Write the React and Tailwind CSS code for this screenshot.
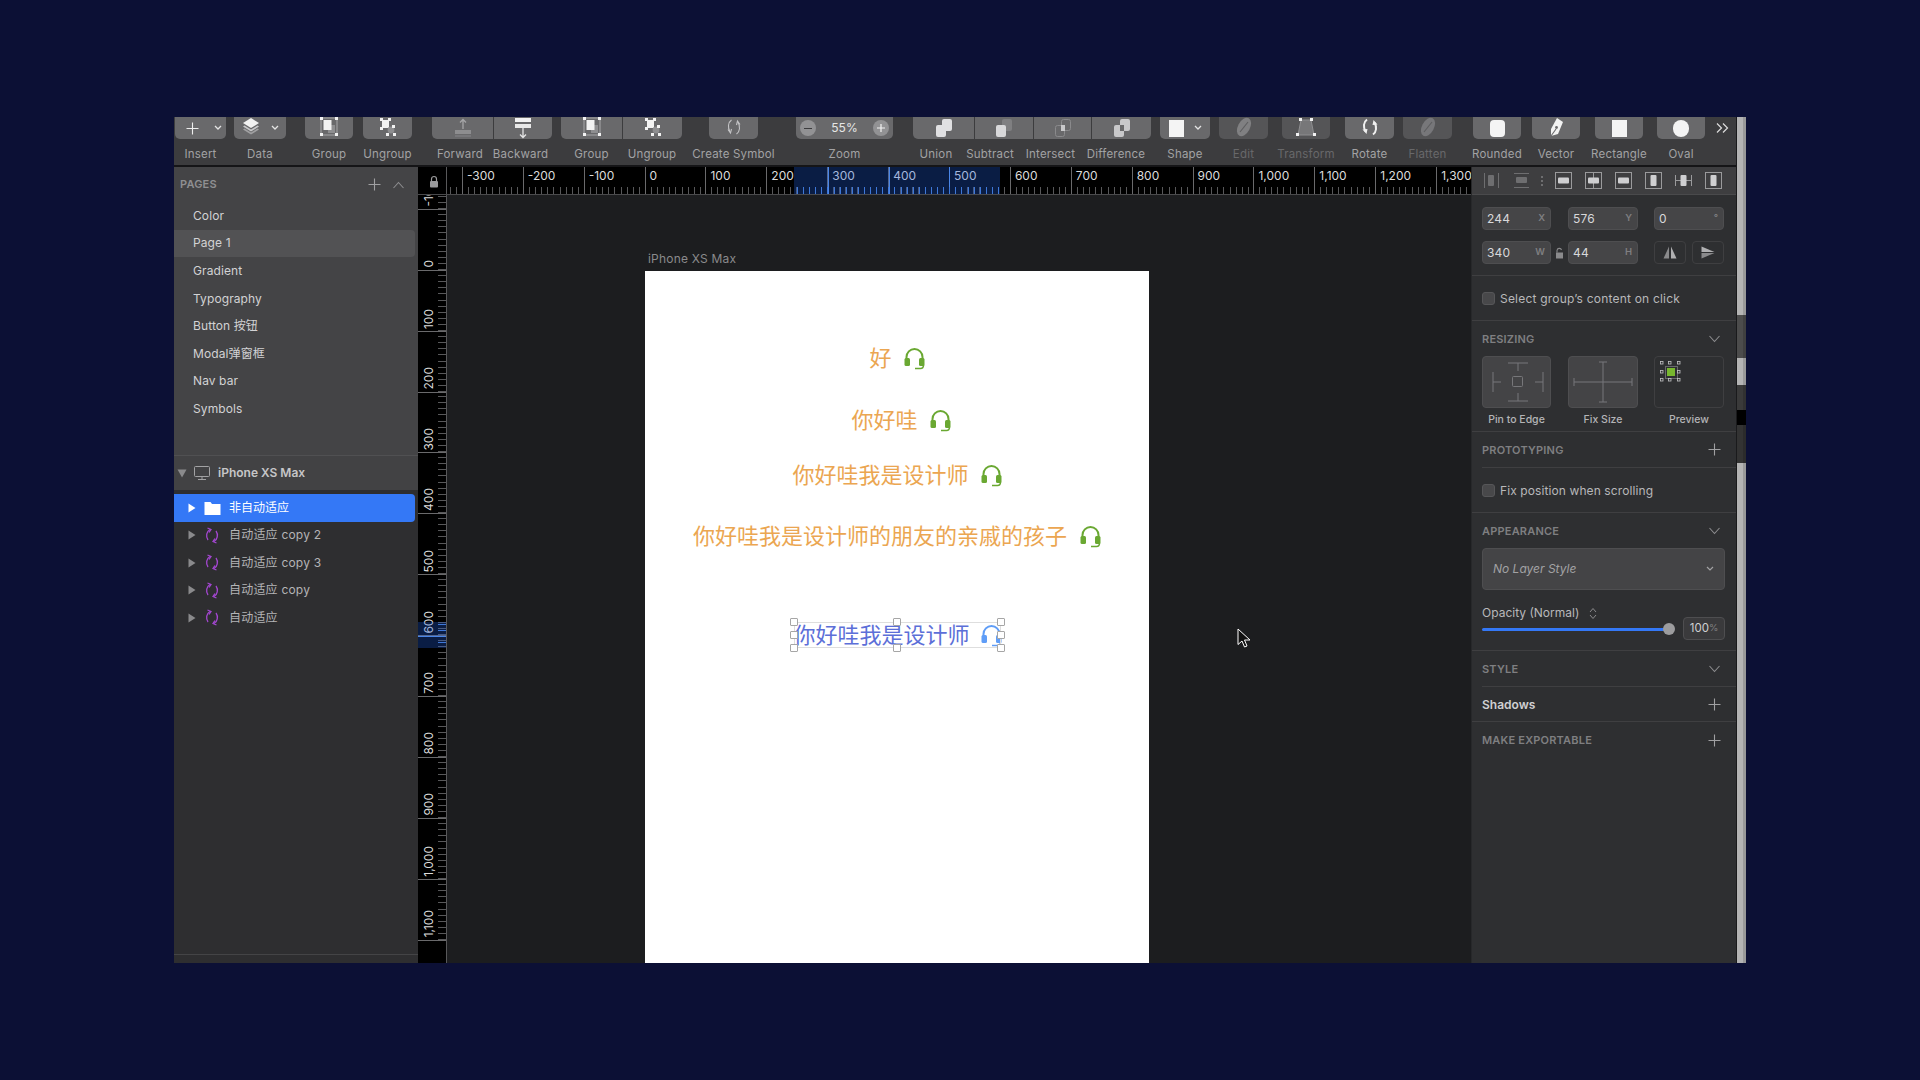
const Svg = ({ w = 22, h = 22, className = "", children }) => (
  <svg width={w} height={h} viewBox={`0 0 ${w} ${h}`} fill="none" className={`shrink-0 ${className}`}>
    {children}
  </svg>
);

const Plus = ({ c = "#bdbdbf" }) => (
  <Svg w={13} h={13}>
    <path d="M6.5 0.5v12M0.5 6.5h12" stroke={c} strokeWidth="1.1" />
  </Svg>
);

const Chevron = ({ c = "#8d8d8f", up = false }) => (
  <Svg w={13} h={8}>
    <path d={up ? "M1.5 7 6.5 1.5 11.5 7" : "M1.5 1 6.5 6.5 11.5 1"} stroke={c} strokeWidth="1.1" />
  </Svg>
);

const MiniChevron = () => (
  <Svg w={8} h={6}>
    <path d="M1 1 4 4 7 1" stroke="#e4e4e4" strokeWidth="1.3" />
  </Svg>
);

const Handles = ({ pts }) =>
  pts.map(([x, y]) => <rect key={`${x}-${y}`} x={x} y={y} width="3" height="3" fill="#f2f2f2" />);

const GroupIcon = () => (
  <Svg>
    <rect x="3" y="1" width="16" height="17" fill="none" stroke="#a8a8aa" />
    <rect x="10" y="8" width="7" height="8" fill="#8e8e90" />
    <rect x="5.5" y="3" width="8" height="10" fill="#f2f2f2" />
    <Handles pts={[[2, 0], [17, 0], [2, 16], [17, 16]]} />
  </Svg>
);

const UngroupIcon = () => (
  <Svg>
    <rect x="5" y="3" width="7" height="8" fill="#f2f2f2" />
    <circle cx="14" cy="13" r="3.4" fill="#8e8e90" />
    <Handles pts={[[3, 1], [11, 1], [3, 10], [15, 8], [9, 16], [16, 16]]} />
  </Svg>
);

const ForwardIcon = () => (
  <Svg>
    <rect x="3" y="13" width="16" height="4" fill="#8d8d8f" />
    <rect x="3" y="18" width="16" height="2" fill="#77777a" />
    <path d="M11 12V3M8 5.5 11 2.5l3 3" stroke="#a5a5a7" strokeWidth="1.3" />
  </Svg>
);

const BackwardIcon = () => (
  <Svg>
    <rect x="3" y="1" width="16" height="4" fill="#f2f2f2" />
    <rect x="3" y="7" width="16" height="4" fill="#e8e8e8" />
    <path d="M11 11v9M8 17.5l3 3 3-3" stroke="#e4e4e4" strokeWidth="1.3" />
  </Svg>
);

const BoolIcon = ({ a, b }) => (
  <Svg>
    <rect x="9" y="2" width="10" height="12" rx="2" fill={a} />
    <rect x="3" y="8" width="10" height="12" rx="2" fill={b} />
  </Svg>
);

const IntersectIcon = () => (
  <Svg>
    <rect x="9.5" y="2.5" width="9" height="11" rx="2" stroke="#8a8a8c" />
    <rect x="3.5" y="8.5" width="9" height="11" rx="2" stroke="#8a8a8c" />
    <rect x="9" y="8" width="4" height="6" fill="#c8c8ca" />
  </Svg>
);

const DifferenceIcon = () => (
  <Svg>
    <rect x="9" y="2" width="10" height="12" rx="2" fill="#c8c8ca" />
    <rect x="3" y="8" width="10" height="12" rx="2" fill="#c8c8ca" />
    <rect x="9" y="8" width="4" height="6" fill="#69696b" />
  </Svg>
);

const EditIcon = ({ c = "#808082" }) => (
  <Svg>
    <ellipse cx="11" cy="10" rx="6" ry="10" transform="rotate(28 11 10)" fill={c} />
    <path d="M7 15 15 5" stroke="#5e5e60" strokeWidth="1.2" />
  </Svg>
);

const TransformIcon = () => (
  <Svg>
    <path d="M6 3h10l3 15H3z" fill="#777779" stroke="#8e8e90" />
    <Handles pts={[[4, 1], [15, 1], [1, 16], [18, 16]]} />
  </Svg>
);

const RotateIcon = () => (
  <Svg>
    <path d="M8 2.5C4.5 5 4 10 6.5 14.5" stroke="#f0f0f0" strokeWidth="2" />
    <path d="M14 17.5C17.5 15 18 10 15.5 5.5" stroke="#f0f0f0" strokeWidth="2" />
    <path d="M3.5 12.5 7.5 17l1-5zM18.5 7.5 14.500 3l-1 5z" fill="#f0f0f0" />
  </Svg>
);

const VectorIcon = () => (
  <Svg>
    <path d="M12 1l6 4-5 12-7 2 0-7z" fill="#f2f2f2" />
    <path d="M6 19l5-7" stroke="#69696b" strokeWidth="1.1" />
    <circle cx="11.500" cy="10.500" r="1.400" fill="#69696b" />
  </Svg>
);

const LayersIcon = () => (
  <Svg w={20} h={22}>
    <path d="M10 1 18 6 10 11 2 6z" fill="#f2f2f2" />
    <path d="M3.500 8.500 10 12.500 16.500 8.500 18 9.500 10 14.500 2 9.500z" fill="#c8c8ca" />
    <path d="M3.500 11.500 10 15.500 16.500 11.500 18 12.500 10 17.500 2 12.500z" fill="#a0a0a2" />
  </Svg>
);

const btn = "h-[22px] w-full flex items-center justify-center";

const Tool = ({ label, className, labelClass = "", shape = "rounded-b-[5px]", dim = false, fill = "bg-[#69696b]", children }) => (
  <div className={`flex flex-col items-center shrink-0 ${className}`}>
    <div className={`${btn} ${fill} ${shape}`}>{children}</div>
    <span className={`mt-[8px] text-[11.5px] leading-[14px] tracking-[0.2px] whitespace-nowrap ${labelClass} ${dim ? "text-[#68686a]" : "text-[#a2a2a4]"}`}>
      {label}
    </span>
  </div>
);

const Toolbar = () => (
  <div className="h-[50px] shrink-0 flex bg-[#3c3c3e] border-b-2 border-[#151517] overflow-hidden">
    <Tool label="Insert" className="w-[51px] ml-[1px]">
      <div className="ml-[6px]"><Plus c="#eeeeee" /></div>
      <div className="ml-[15px]"><MiniChevron /></div>
    </Tool>
    <Tool label="Data" className="w-[52px] ml-[8px]">
      <LayersIcon />
      <div className="ml-[10px]"><MiniChevron /></div>
    </Tool>
    <Tool label="Group" className="w-[48px] ml-[19px]"><GroupIcon /></Tool>
    <Tool label="Ungroup" className="w-[49px] ml-[10px]"><UngroupIcon /></Tool>
    <Tool label="Forward" labelClass="mr-[5px]" className="w-[61px] ml-[20px]" shape="rounded-bl-[5px]"><ForwardIcon /></Tool>
    <Tool label="Backward" labelClass="mr-[5px]" className="w-[59px] border-l border-l-transparent" shape="rounded-br-[5px]"><BackwardIcon /></Tool>
    <Tool label="Group" className="w-[61px] ml-[9px]" shape="rounded-bl-[5px]"><GroupIcon /></Tool>
    <Tool label="Ungroup" labelClass="mr-[1px]" className="w-[60px] border-l border-l-transparent" shape="rounded-br-[5px]"><UngroupIcon /></Tool>
    <Tool label="Create Symbol" className="w-[49px] ml-[27px]">
      <Svg>
        <path d="M8.500 3C5 5.500 4.500 10.500 7 15" stroke="#c4c4c6" strokeWidth="1.100" />
        <path d="M13.500 17C17 14.500 17.500 9.500 15 5" stroke="#c4c4c6" strokeWidth="1.100" />
        <path d="M5 12.500l2.500 3.500 1-4M17 7.500 14.500 4l-1 4" stroke="#c4c4c6" strokeWidth="1.100" />
      </Svg>
    </Tool>
    <Tool label="Zoom" className="w-[97px] ml-[38px]">
      <div className="w-full flex items-center justify-between px-[4px]">
        <div className="w-[16px] h-[16px] rounded-full bg-[#929294] flex items-center justify-center">
          <div className="w-[8px] h-px bg-[#3c3c3e]" />
        </div>
        <span className="text-[12px] text-[#e6e6e6]">55%</span>
        <div className="w-[16px] h-[16px] rounded-full bg-[#929294] flex items-center justify-center">
          <Svg w={10} h={10}><path d="M5 1v8M1 5h8" stroke="#f2f2f2" strokeWidth="1.200" /></Svg>
        </div>
      </div>
    </Tool>
    <Tool label="Union" labelClass="mr-[15px]" className="w-[61px] ml-[20px]" shape="rounded-bl-[5px]"><BoolIcon a="#e0e0e2" b="#e0e0e2" /></Tool>
    <Tool label="Subtract" labelClass="mr-[28px]" className="w-[59px] border-l border-l-transparent" shape=""><BoolIcon a="#7f7f81" b="#d8d8da" /></Tool>
    <Tool label="Intersect" labelClass="mr-[24px]" className="w-[58px] border-l border-l-transparent" shape=""><IntersectIcon /></Tool>
    <Tool label="Difference" labelClass="mr-[11px]" className="w-[60px] border-l border-l-transparent" shape="rounded-br-[5px]"><DifferenceIcon /></Tool>
    <Tool label="Shape" className="w-[50px] ml-[9px]">
      <div className="w-[15px] h-[17px] bg-[#f4f4f4]" />
      <div className="ml-[10px]"><MiniChevron /></div>
    </Tool>
    <Tool label="Edit" dim className="w-[49px] ml-[9px]" fill="bg-[#555557]"><EditIcon /></Tool>
    <Tool label="Transform" dim className="w-[48px] ml-[14px]" fill="bg-[#555557]"><TransformIcon /></Tool>
    <Tool label="Rotate" className="w-[49px] ml-[15px]"><RotateIcon /></Tool>
    <Tool label="Flatten" dim className="w-[49px] ml-[9px]" fill="bg-[#555557]"><EditIcon c="#77777a" /></Tool>
    <Tool label="Rounded" className="w-[48px] ml-[21px]"><div className="w-[15px] h-[17px] rounded-[4px] bg-[#f4f4f4]" /></Tool>
    <Tool label="Vector" className="w-[48px] ml-[11px]"><VectorIcon /></Tool>
    <Tool label="Rectangle" className="w-[48px] ml-[15px]"><div className="w-[15px] h-[17px] bg-[#f4f4f4]" /></Tool>
    <Tool label="Oval" className="w-[48px] ml-[14px]"><div className="w-[16px] h-[17px] rounded-full bg-[#f4f4f4]" /></Tool>
    <div className="ml-[10px] h-[22px] flex items-center">
      <Svg w={14} h={12}>
        <path d="M2 1.500 6.500 6 2 10.500M8 1.500 12.500 6 8 10.500" stroke="#dcdcdc" strokeWidth="1.200" />
      </Svg>
    </div>
  </div>
);

const pages = ["Color", "Page 1", "Gradient", "Typography", "Button 按钮", "Modal弹窗框", "Nav bar", "Symbols"];
const layers = ["自动适应 copy 2", "自动适应 copy 3", "自动适应 copy", "自动适应"];

const Triangle = ({ c = "#8a8a8c" }) => (
  <Svg w={8} h={10}><path d="M0.500 0.500 7.500 5 0.500 9.500z" fill={c} /></Svg>
);

const SymbolIcon = () => (
  <Svg w={16} h={17}>
    <path d="M6 2.500C2.500 4.500 1.500 9.500 4 13" stroke="#a447d1" strokeWidth="1.300" />
    <path d="M10 14.500C13.500 12.500 14.500 7.500 12 4" stroke="#a447d1" strokeWidth="1.300" />
    <path d="M3.500 1 7 2.500 5 5.500M12.500 16 9 14.500l2-3" stroke="#a447d1" strokeWidth="1.300" />
  </Svg>
);

const LeftPanel = () => (
  <div className="w-[244px] shrink-0 flex flex-col">
    <div className="h-[288px] shrink-0 bg-[#444446]">
      <div className="h-[35px] flex items-center pl-[6px] pr-[13px]">
        <span className="text-[11px] font-semibold tracking-[0.2px] text-[#8f8f91]">PAGES</span>
        <div className="ml-auto mr-[11px]"><Plus c="#a0a0a2" /></div>
        <Chevron up />
      </div>
      {pages.map((p) => (
        <div
          key={p}
          className={`h-[27.6px] w-[241px] flex items-center pl-[19px] text-[12px] tracking-[0.1px] text-[#d2d2d4] rounded-r-[4px] ${p === "Page 1" ? "bg-[#525254]" : ""}`}
        >
          {p}
        </div>
      ))}
    </div>
    <div className="h-[35px] shrink-0 flex items-center bg-[#424244] border-t border-[#505052] pl-[3px]">
      <Svg w={10} h={9}><path d="M0.500 0.500h9L5 8.500z" fill="#8a8a8c" /></Svg>
      <Svg w={18} h={16} className="ml-[6px]">
        <rect x="1.500" y="1.500" width="15" height="10" rx="1" stroke="#a2a2a4" />
        <path d="M5 14.500h8M9 11.500v3" stroke="#a2a2a4" />
      </Svg>
      <span className="ml-[7px] text-[12px] font-semibold text-[#c6c6c8]">iPhone XS Max</span>
    </div>
    <div className="flex-1 bg-[#2e2e30] pt-[4px] flex flex-col">
      <div className="h-[27.6px] w-[241px] flex items-center bg-[#3478f6] rounded-r-[4px] pl-[14px]">
        <Triangle c="#ffffff" />
        <Svg w={17} h={14} className="ml-[8px]"><path d="M0.500 1h6l1.500 2h8.500v11H0.500z" fill="#ffffff" /></Svg>
        <span className="ml-[8px] text-[12px] text-white">非自动适应</span>
      </div>
      {layers.map((l) => (
        <div key={l} className="h-[27.5px] flex items-center pl-[14px]">
          <Triangle />
          <div className="ml-[8px]"><SymbolIcon /></div>
          <span className="ml-[9px] text-[12px] tracking-[0.2px] text-[#b4b4b6]">{l}</span>
        </div>
      ))}
      <div className="mt-auto h-[9px] border-t border-[#444446]" />
    </div>
  </div>
);

const hLabels = ["-400", "-300", "-200", "-100", "0", "100", "200", "300", "400", "500", "600", "700", "800", "900", "1,000", "1,100", "1,200", "1,300"];
const vLabels = ["-100", "0", "100", "200", "300", "400", "500", "600", "700", "800", "900", "1,000", "1,100"];
const hTicks = "bg-[repeating-linear-gradient(90deg,transparent_0,transparent_5.09px,#58585a_5.09px,#58585a_6.09px)]";
const vTicks = "bg-[repeating-linear-gradient(0deg,#58585a_0,#58585a_1px,transparent_1px,transparent_6.09px)]";

const HRuler = () => (
  <div className="h-[28px] shrink-0 flex bg-black border-b border-[#4a4a4c]">
    <div className="w-[29px] shrink-0 flex items-center justify-center pl-[3px] pt-[1px] border-r border-[#58585a]">
      <Svg w={10} h={13}>
        <path d="M2.500 6V4a2.500 2.500 0 0 1 5 0v2" stroke="#9a9a9c" strokeWidth="1.200" />
        <rect x="1" y="6" width="8" height="6.500" rx="1" fill="#9a9a9c" />
      </Svg>
    </div>
    <div className="relative flex-1 overflow-hidden">
      <div className="flex h-full -ml-[46px]">
        {hLabels.map((l) => (
          <div key={l} className="w-[60.9px] shrink-0 h-full flex flex-col border-l border-[#6a6a6c]">
            {/* the -400 cell only shows its ticks, its number is scrolled out of view */}
            <span className="pl-[4px] pt-[1px] h-[16px] text-[12px] leading-[15px] text-[#dcdcdc] whitespace-nowrap">
              {l === "-400" ? "" : l}
            </span>
            <div className={`mt-auto h-[7px] ${hTicks}`} />
          </div>
        ))}
      </div>
      {/* selection highlight: layer spans 244..584 */}
      <div className="absolute top-0 left-[347px] w-[206px] h-full flex bg-[#2060e0]/30 overflow-hidden">
        <div className="absolute bottom-0 left-[3px] right-0 h-[7px] bg-[repeating-linear-gradient(90deg,#3f78d8_0,#3f78d8_1px,transparent_1px,transparent_6.09px)]" />
        <div className="ml-[33.7px] w-[60.9px] shrink-0 border-l border-[#4a86e8]" />
        <div className="w-[60.9px] shrink-0 border-l border-[#4a86e8]" />
        <div className="w-[50px] shrink-0 border-l border-[#4a86e8]" />
      </div>
    </div>
  </div>
);

const VRuler = () => (
  <div className="relative w-[29px] shrink-0 bg-black border-r border-[#58585a] overflow-hidden">
    <div className="-mt-[46px] flex flex-col">
      {vLabels.map((l) => (
        <div key={l} className="h-[60.9px] shrink-0 flex border-b border-[#6a6a6c]">
          <div className="flex-1 flex items-end justify-center pl-[2px] pb-[2px]">
            <span className="[writing-mode:vertical-rl] rotate-180 text-[12px] leading-[14px] text-[#dcdcdc] whitespace-nowrap">{l}</span>
          </div>
          <div className={`w-[8px] ${vTicks}`} />
        </div>
      ))}
    </div>
    {/* selection highlight: layer spans 576..620 */}
    <div className="absolute top-[427px] left-0 w-full h-[26px] flex flex-col items-end bg-[#2060e0]/30">
      <div className="mt-[2px] w-[8px] h-px bg-[#3f78d8]" />
      <div className="mt-[5px] w-[8px] h-px bg-[#3f78d8]" />
      <div className="mt-[5.4px] w-full h-px bg-[#4a86e8]" />
      <div className="mt-[5px] w-[8px] h-px bg-[#3f78d8]" />
    </div>
  </div>
);

const Headset = ({ c = "#6aa832" }) => (
  <Svg w={21} h={23}>
    <path d="M2.500 13V10a8 8 0 0 1 16 0v3" stroke={c} strokeWidth="2" />
    <rect x="0.500" y="11" width="5.500" height="8" rx="1.500" fill={c} />
    <rect x="15" y="11" width="5.500" height="8" rx="1.500" fill={c} />
    <path d="M19.500 18c0 2.500-1 3.500-3 3.500H11" stroke={c} strokeWidth="1.500" />
  </Svg>
);

const SelHandle = ({ className }) => (
  <div className={`absolute w-[8px] h-[8px] bg-white border border-[#a6a6a6] rounded-[1px] ${className}`} />
);

const Artboard = () => (
  <div className="flex-1 flex flex-col items-center bg-white text-[22px] leading-[26px] text-[#eba651]">
    <div className="mt-[74px] h-[26px] flex items-center gap-[12px]">
      <span>好</span>
      <Headset />
    </div>
    <div className="mt-[36px] ml-[8px] h-[26px] flex items-center gap-[12px]">
      <span>你好哇</span>
      <Headset />
    </div>
    <div className="mt-[29px] h-[26px] flex items-center gap-[12px]">
      <span>你好哇我是设计师</span>
      <Headset />
    </div>
    <div className="mt-[35px] h-[26px] flex items-center gap-[13px]">
      <span>你好哇我是设计师的朋友的亲戚的孩子</span>
      <Headset />
    </div>
    <div className="relative mt-[73px] h-[26px] w-[207px] flex items-center gap-[11px] text-[#5c6fd8]">
      <span className="whitespace-nowrap">你好哇我是设计师</span>
      <Headset c="#5f9df7" />
      <div className="absolute inset-0 border border-[#dedede]" />
      <SelHandle className="-left-[4px] -top-[4px]" />
      <SelHandle className="left-[99px] -top-[4px]" />
      <SelHandle className="-right-[4px] -top-[4px]" />
      <SelHandle className="-left-[4px] top-[9px]" />
      <SelHandle className="-right-[4px] top-[9px]" />
      <SelHandle className="-left-[4px] -bottom-[4px]" />
      <SelHandle className="left-[99px] -bottom-[4px]" />
      <SelHandle className="-right-[4px] -bottom-[4px]" />
    </div>
  </div>
);

const Canvas = () => (
  <div className="relative flex-1 flex flex-col bg-[#1c1d1f] pt-[57px] pl-[198px] overflow-hidden">
    <div className="h-[14px] mb-[5px] pl-[3px] text-[12px] leading-[14px] tracking-[0.2px] text-[#8a8a8c]">iPhone XS Max</div>
    <div className="w-[504px] flex-1 flex flex-col">
      <Artboard />
    </div>
    {/* mouse pointer */}
    <Svg w={15} h={21} className="absolute left-[790px] top-[433px]">
      <path d="M1 1v15.500l4-3.500 2.500 6 2.500-1-2.500-6h5.500z" fill="#111111" stroke="#ffffff" strokeWidth="1" />
    </Svg>
  </div>
);

const AlignIcon = ({ kind }) => (
  <Svg w={17} h={17}>
    {kind === "distH" && (
      <>
        <path d="M1.500 1v15M15.500 1v15" stroke="#6e6e70" />
        <rect x="5" y="3" width="6" height="11" rx="1" fill="#6e6e70" />
      </>
    )}
    {kind === "distV" && (
      <>
        <path d="M1 1.500h15M1 15.500h15" stroke="#6e6e70" />
        <rect x="3" y="5" width="11" height="6" rx="1" fill="#6e6e70" />
      </>
    )}
    {kind === "h" && (
      <>
        <rect x="0.500" y="0.500" width="16" height="16" stroke="#9a9a9c" />
        <rect x="3" y="5.500" width="11" height="6" rx="1" fill="#cfcfd1" />
      </>
    )}
    {kind === "hc" && (
      <>
        <rect x="0.500" y="0.500" width="16" height="16" stroke="#9a9a9c" />
        <path d="M8.500 0v17" stroke="#9a9a9c" />
        <rect x="3" y="5.500" width="11" height="6" rx="1" fill="#cfcfd1" />
      </>
    )}
    {kind === "v" && (
      <>
        <rect x="0.500" y="0.500" width="16" height="16" stroke="#9a9a9c" />
        <rect x="5.500" y="3" width="6" height="11" rx="1" fill="#cfcfd1" />
      </>
    )}
    {kind === "vc" && (
      <>
        <path d="M0 8.500h17M0.500 3v11M16.500 3v11" stroke="#9a9a9c" />
        <rect x="5.500" y="3" width="6" height="11" rx="1" fill="#cfcfd1" />
      </>
    )}
  </Svg>
);

const Field = ({ value, unit, className }) => (
  <div className={`h-[23px] flex items-center justify-between pl-[4px] pr-[5px] rounded-[4px] bg-[#454547] border border-[#4e4e50] ${className}`}>
    <span className="text-[12px] tracking-[0.2px] text-[#d8d8da]">{value}</span>
    <span className="text-[9.5px] font-semibold text-[#7f7f81]">{unit}</span>
  </div>
);

const SectionTitle = ({ children, className = "text-[#7f7f81] text-[11px] tracking-[0.2px]" }) => (
  <span className={`pt-[1px] font-semibold ${className}`}>{children}</span>
);

const Section = ({ title, action, className = "" }) => (
  <div className={`flex items-center justify-between pr-[15px] ${className}`}>
    {title}
    {action === "plus" ? <Plus c="#a0a0a2" /> : <Chevron />}
  </div>
);

const Checkbox = () => (
  <div className="w-[13px] h-[13px] rounded-[3px] bg-[#48484a] border border-[#565658]" />
);

const RightPanel = () => (
  <div className="w-[265px] shrink-0 flex flex-col bg-[#2e2f31] border-l border-[#27282a]">
    <div className="h-[28px] shrink-0 bg-[#3e3e40] border-b border-[#4a4a4c] flex items-center pl-[11px]">
      <AlignIcon kind="distH" />
      <div className="ml-[13px]"><AlignIcon kind="distV" /></div>
      <div className="ml-[11px] flex flex-col gap-[2px]">
        <div className="w-[2px] h-[2px] bg-[#6e6e70]" />
        <div className="w-[2px] h-[2px] bg-[#6e6e70]" />
        <div className="w-[2px] h-[2px] bg-[#6e6e70]" />
      </div>
      <div className="ml-[12px]"><AlignIcon kind="h" /></div>
      <div className="ml-[13px]"><AlignIcon kind="hc" /></div>
      <div className="ml-[13px]"><AlignIcon kind="h" /></div>
      <div className="ml-[13px]"><AlignIcon kind="v" /></div>
      <div className="ml-[13px]"><AlignIcon kind="vc" /></div>
      <div className="ml-[13px]"><AlignIcon kind="v" /></div>
    </div>

    <div className="pt-[12px] pb-[11px] pl-[10px] pr-[11px] border-b border-[#3f3f41]">
      <div className="flex">
        <Field value="244" unit="X" className="w-[69px]" />
        <Field value="576" unit="Y" className="w-[70px] ml-[17px]" />
        <Field value="0" unit="°" className="w-[70px] ml-[16px]" />
      </div>
      <div className="flex mt-[11px]">
        <Field value="340" unit="W" className="w-[69px]" />
        <div className="w-[17px] flex items-center justify-center">
          <Svg w={9} h={12}>
            <path d="M2 5.500V3.500a2.300 2.300 0 0 1 4.500-.5" stroke="#8a8a8c" strokeWidth="1.100" />
            <rect x="1" y="5.500" width="7" height="6" fill="#8a8a8c" />
          </Svg>
        </div>
        <Field value="44" unit="H" className="w-[70px]" />
        <div className="ml-[16px] w-[32px] h-[23px] flex items-center justify-center rounded-[4px] border border-[#3f3f41]">
          <Svg w={14} h={13}>
            <path d="M6 0.500 0.500 12.500H6z" fill="#8a8a8c" />
            <path d="M8 0.500l5.500 12H8z" fill="#b0b0b2" />
          </Svg>
        </div>
        <div className="ml-[6px] w-[32px] h-[23px] flex items-center justify-center rounded-[4px] border border-[#3f3f41]">
          <Svg w={14} h={13}>
            <path d="M0.500 0.500l13 5.500H0.500z" fill="#b0b0b2" />
            <path d="M0.500 12.500l13-5.500H0.500z" fill="#8a8a8c" />
          </Svg>
        </div>
      </div>
    </div>

    <div className="h-[45px] shrink-0 flex items-center gap-[5px] pl-[10px] border-b border-[#3f3f41]">
      <Checkbox />
      <span className="pt-[1px] text-[12px] tracking-[0.2px] text-[#b8b8ba]">Select group’s content on click</span>
    </div>

    <div className="h-[111px] shrink-0 pl-[10px] border-b border-[#3f3f41]">
      <Section className="h-[35px]" title={<SectionTitle>RESIZING</SectionTitle>} />
      <div className="flex">
        <div className="w-[69px] h-[52px] rounded-[4px] bg-[#444446] border border-[#4e4e50] flex items-center justify-center">
          <Svg w={60} h={46}>
            <path d="M21 4h20M31 4v8M21 42h20M31 42V34M6 13v20M6 23h8M56 13v20M56 23h-8" stroke="#77777a" />
            <rect x="25.500" y="17.500" width="10" height="10" rx="1" stroke="#77777a" />
          </Svg>
        </div>
        <div className="w-[70px] h-[52px] ml-[17px] rounded-[4px] bg-[#444446] border border-[#4e4e50] flex items-center justify-center">
          <Svg w={60} h={46}>
            <path d="M1 23h58M1 19v8M59 19v8M30 3v40M26 3h8M26 43h8" stroke="#77777a" />
          </Svg>
        </div>
        <div className="w-[70px] h-[52px] ml-[16px] rounded-[4px] border border-[#3f3f41] pl-[4px] pt-[3px]">
          <Svg w={24} h={24}>
            <rect x="6.500" y="6.500" width="12" height="12" fill="none" stroke="#6a6a6c" />
            <rect x="8" y="8" width="8" height="8" fill="#78b72f" />
            {[[1, 1], [9, 1], [18, 1], [1, 10], [18, 10], [1, 18], [9, 18], [18, 18]].map(([x, y]) => (
              <rect key={`${x}-${y}`} x={x + 0.5} y={y + 0.5} width="2.500" height="2.500" fill="#2e2f31" stroke="#c4c4c6" strokeWidth="0.800" />
            ))}
          </Svg>
        </div>
      </div>
      <div className="flex h-[24px] items-center text-[10.5px] font-medium text-[#b4b4b6]">
        <span className="w-[69px] text-center">Pin to Edge</span>
        <span className="w-[70px] ml-[17px] text-center">Fix Size</span>
        <span className="w-[70px] ml-[16px] text-center">Preview</span>
      </div>
    </div>

    <div className="pl-[10px]">
      <Section className="h-[36px] border-b border-[#3f3f41]" action="plus" title={<SectionTitle>PROTOTYPING</SectionTitle>} />
    </div>
    <div className="h-[45px] shrink-0 flex items-center gap-[5px] pl-[10px] border-b border-[#3f3f41]">
      <Checkbox />
      <span className="pt-[1px] text-[12px] tracking-[0.1px] text-[#b8b8ba]">Fix position when scrolling</span>
    </div>

    <div className="h-[138px] shrink-0 pl-[10px] pr-[11px] border-b border-[#3f3f41]">
      <div className="-mr-[11px]">
        <Section className="h-[35px]" title={<SectionTitle>APPEARANCE</SectionTitle>} />
      </div>
      <div className="h-[42px] flex items-center justify-between pl-[10px] pr-[10px] rounded-[4px] bg-[#444446] border border-[#4e4e50]">
        <span className="text-[12px] italic text-[#a2a2a4]">No Layer Style</span>
        <Svg w={8} h={6}><path d="M1 1 4 4 7 1" stroke="#a2a2a4" strokeWidth="1.200" /></Svg>
      </div>
      <div className="mt-[16px] flex justify-between">
        <div className="w-[193px]">
          <div className="h-[14px] flex items-center gap-[10px] text-[12px] text-[#b8b8ba]">
            Opacity (Normal)
            <Svg w={8} h={13}><path d="M1 5 4 1.500 7 5M1 8 4 11.500 7 8" stroke="#8a8a8c" /></Svg>
          </div>
          <div className="mt-[2px] h-[14px] flex items-center">
            <div className="w-[187px] h-[3px] rounded-full bg-[#3478f6]" />
            <div className="-ml-[6px] w-[12px] h-[12px] rounded-full bg-[#9c9c9e]" />
          </div>
        </div>
        <div className="mt-[11px] w-[42px] h-[23px] flex items-center justify-center rounded-[4px] bg-[#3a3a3c] border border-[#4e4e50]">
          <span className="text-[11.5px] text-[#d0d0d2]">100</span>
          <span className="text-[9.5px] text-[#808082]">%</span>
        </div>
      </div>
    </div>

    <div className="pl-[10px]">
      <Section className="h-[36px] border-b border-[#3f3f41]" title={<SectionTitle>STYLE</SectionTitle>} />
    </div>
    <div className="h-[35px] shrink-0 pl-[10px] border-b border-[#3f3f41]">
      <Section className="h-full" action="plus" title={<SectionTitle className="text-[12px] text-[#d0d0d2]">Shadows</SectionTitle>} />
    </div>
    <div className="pl-[10px]">
      <Section className="h-[36px]" action="plus" title={<SectionTitle>MAKE EXPORTABLE</SectionTitle>} />
    </div>
  </div>
);

// sliver of the window behind, visible at the right edge
const segments = [
  "h-[198px] bg-[#b4b4b4]",
  "h-[43px] bg-[#4c4c4c]",
  "h-[27px] bg-[#b4b4b4]",
  "h-[25px] bg-[#3a3a3a]",
  "h-[15px] bg-black",
  "h-[38px] bg-[#333333]",
  "flex-1 bg-[#b4b4b4]",
];

const App = () => (
  <div className="min-h-screen w-full bg-[#0c1035] pt-[117px] pl-[174px] [font-family:Inter,'Noto_Sans_CJK_SC',sans-serif]">
    <div className="w-[1572px] h-[846px] flex overflow-hidden">
      <div className="w-[1563px] shrink-0 flex flex-col border-r border-[#1a1a1c]">
        <Toolbar />
        <div className="flex-1 min-h-0 flex">
          <LeftPanel />
          <div className="flex-1 min-w-0 flex flex-col">
            <HRuler />
            <div className="flex-1 min-h-0 flex">
              <VRuler />
              <Canvas />
            </div>
          </div>
          <RightPanel />
        </div>
      </div>
      <div className="flex-1 flex flex-col">
        {segments.map((s) => (
          <div key={s} className={`${s} border-r-[3px] border-black/15`} />
        ))}
      </div>
    </div>
  </div>
);

export default App;
